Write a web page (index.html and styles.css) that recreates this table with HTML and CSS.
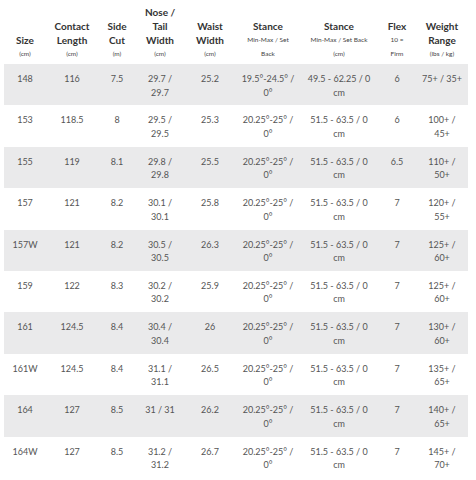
FILE: index.html
```html
<!DOCTYPE html>
<html>
<head>
<meta charset="utf-8">
<link rel="stylesheet" href="styles.css">
</head>
<body>
<table class="specs">
  <colgroup>
    <col class="c-size"><col class="c-contact"><col class="c-side"><col class="c-nose"><col class="c-waist"><col class="c-st1"><col class="c-st2"><col class="c-flex"><col class="c-weight">
  </colgroup>
  <thead>
    <tr>
      <th><span class="t">Size</span><span class="s">(cm)</span></th>
      <th><span class="t">Contact<br>Length</span><span class="s">(cm)</span></th>
      <th><span class="t">Side<br>Cut</span><span class="s">(m)</span></th>
      <th><span class="t">Nose /<br>Tail<br>Width</span><span class="s">(cm)</span></th>
      <th><span class="t">Waist<br>Width</span><span class="s">(cm)</span></th>
      <th><span class="t">Stance</span><span class="s">Min-Max / Set<br>Back</span></th>
      <th><span class="t">Stance</span><span class="s">Min-Max / Set Back<br>(cm)</span></th>
      <th><span class="t">Flex</span><span class="s">10 =<br>Firm</span></th>
      <th><span class="t">Weight<br>Range</span><span class="s">(lbs / kg)</span></th>
    </tr>
  </thead>
  <tbody>
    <tr><td>148</td><td>116</td><td>7.5</td><td>29.7 / 29.7</td><td>25.2</td><td class="st1">19.5°-24.5° / 0°</td><td class="st2">49.5 - 62.25 / 0 cm</td><td>6</td><td>75+ / 35+</td></tr>
    <tr><td>153</td><td>118.5</td><td>8</td><td>29.5 / 29.5</td><td>25.3</td><td class="st1">20.25°-25° / 0°</td><td class="st2">51.5 - 63.5 / 0 cm</td><td>6</td><td>100+ / 45+</td></tr>
    <tr><td>155</td><td>119</td><td>8.1</td><td>29.8 / 29.8</td><td>25.5</td><td class="st1">20.25°-25° / 0°</td><td class="st2">51.5 - 63.5 / 0 cm</td><td>6.5</td><td>110+ / 50+</td></tr>
    <tr><td>157</td><td>121</td><td>8.2</td><td>30.1 / 30.1</td><td>25.8</td><td class="st1">20.25°-25° / 0°</td><td class="st2">51.5 - 63.5 / 0 cm</td><td>7</td><td>120+ / 55+</td></tr>
    <tr><td>157W</td><td>121</td><td>8.2</td><td>30.5 / 30.5</td><td>26.3</td><td class="st1">20.25°-25° / 0°</td><td class="st2">51.5 - 63.5 / 0 cm</td><td>7</td><td>125+ / 60+</td></tr>
    <tr><td>159</td><td>122</td><td>8.3</td><td>30.2 / 30.2</td><td>25.9</td><td class="st1">20.25°-25° / 0°</td><td class="st2">51.5 - 63.5 / 0 cm</td><td>7</td><td>125+ / 60+</td></tr>
    <tr><td>161</td><td>124.5</td><td>8.4</td><td>30.4 / 30.4</td><td>26</td><td class="st1">20.25°-25° / 0°</td><td class="st2">51.5 - 63.5 / 0 cm</td><td>7</td><td>130+ / 60+</td></tr>
    <tr><td>161W</td><td>124.5</td><td>8.4</td><td>31.1 / 31.1</td><td>26.5</td><td class="st1">20.25°-25° / 0°</td><td class="st2">51.5 - 63.5 / 0 cm</td><td>7</td><td>135+ / 65+</td></tr>
    <tr><td>164</td><td>127</td><td>8.5</td><td>31 / 31</td><td>26.2</td><td class="st1">20.25°-25° / 0°</td><td class="st2">51.5 - 63.5 / 0 cm</td><td>7</td><td>140+ / 65+</td></tr>
    <tr><td>164W</td><td>127</td><td>8.5</td><td>31.2 / 31.2</td><td>26.7</td><td class="st1">20.25°-25° / 0°</td><td class="st2">51.5 - 63.5 / 0 cm</td><td>7</td><td>145+ / 70+</td></tr>
  </tbody>
</table>
</body>
</html>
```
FILE: styles.css
```css
html, body {
  margin: 0;
  padding: 0;
  background: #fff;
}
body {
  padding: 0 8px 0 4px;
  font-family: Lato, "Liberation Sans", sans-serif;
}
.specs {
  width: 464px;
  border-collapse: collapse;
  table-layout: fixed;
  color: #555;
  font-size: 9px;
}
.c-size { width: 42px; }
.c-contact { width: 52px; }
.c-side { width: 38px; }
.c-nose { width: 48px; }
.c-waist { width: 52px; }
.c-st1 { width: 64px; }
.c-st2 { width: 78px; }
.c-flex { width: 38px; }
.c-weight { width: 52px; }

.specs th {
  height: 64px;
  box-sizing: border-box;
  padding: 0 3px 3px;
  vertical-align: bottom;
  text-align: center;
  color: #333;
}
.specs th .t {
  display: block;
  font-weight: 700;
  font-size: 10px;
  line-height: 14px;
}
.specs th .s {
  display: block;
  font-weight: 400;
  font-size: 6.5px;
  line-height: 14px;
  color: #444;
}
.specs td {
  height: 41.4px;
  box-sizing: border-box;
  padding: 8px 5px 0;
  vertical-align: top;
  text-align: center;
  line-height: 13.5px;
}
.specs td.st1 {
  padding-left: 2px;
  padding-right: 2px;
}
.specs td.st2 {
  padding-left: 5px;
  padding-right: 5px;
}
.specs tbody tr:nth-child(odd) td {
  background: #eaeaeb;
}
```
